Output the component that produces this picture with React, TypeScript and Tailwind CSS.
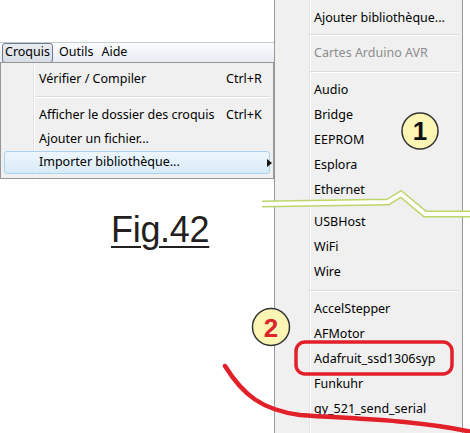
const font = { fontFamily: '"Noto Sans", "Open Sans", sans-serif' };

function Sep({ h }: { h: string }) {
  return (
    <div className={`flex items-center ${h}`}>
      <div className="ml-[35px] mr-[3px] h-[2px] flex-1 border-t border-[#dcdcdc] border-b-white bg-white" />
    </div>
  );
}

function SubItem({ label, h = 'h-[25px]', muted = false }: { label: string; h?: string; muted?: boolean }) {
  return (
    <div className={`flex items-center pl-[39px] ${h} ${muted ? 'text-[#8d8d8d]' : 'text-black'}`}>{label}</div>
  );
}

function LeftMenu() {
  return (
    <div className="pt-[42px]">
      <div className="flex h-[20px] items-center border-t border-[#c6cbd2] bg-gradient-to-b from-[#fbfcfe] to-[#e7ecf3] text-[12.5px]">
        <div className="ml-[2px] flex h-[20px] w-[51px] items-center justify-center rounded-[3px] border border-[#6f7b8c] bg-gradient-to-b from-[#e9ecf0] to-[#d9dee6]">
          Croquis
        </div>
        <span className="ml-[6px]">Outils</span>
        <span className="ml-[8px]">Aide</span>
      </div>
      <div className="relative h-[117px] border border-[#979797] bg-[#f0f0f0] text-[12.5px]">
        <div className="absolute left-[32px] top-0 h-full w-[2px] border-l border-[#e2e3e3] bg-white" />
        <div className="relative pt-[4px]">
          <div className="flex h-[24px] items-center pl-[38px] pr-[7px]">
            <span className="flex-1">Vérifier / Compiler</span>
            <span className="w-[40px]">Ctrl+R</span>
          </div>
          <div className="flex h-[12px] items-center">
            <div className="ml-[34px] mr-[3px] h-[2px] flex-1 border-t border-[#dcdcdc] bg-white" />
          </div>
          <div className="flex h-[24px] items-center pl-[38px] pr-[7px]">
            <span className="flex-1">Afficher le dossier des croquis</span>
            <span className="w-[40px]">Ctrl+K</span>
          </div>
          <div className="flex h-[24px] items-center pl-[38px]">Ajouter un fichier...</div>
          <div className="mx-[3px] flex h-[23px] items-center rounded-[3px] border border-[#a9d3ef] bg-gradient-to-b from-[#eef6fd] to-[#d8eaf8] pl-[34px]">
            <span className="flex-1">Importer bibliothèque...</span>
            <svg width="5" height="8" viewBox="0 0 5 8" className="mr-[-3px]">
              <path d="M0 0 L5 4 L0 8 Z" fill="#111" />
            </svg>
          </div>
        </div>
      </div>
      <div className="mt-[33px] pl-[111px] text-[36px] leading-none tracking-[-0.3px] text-[#231f20] underline decoration-[2px] underline-offset-[4px]" style={{ fontFamily: '"Liberation Sans", Arial, sans-serif' }}>
        Fig.42
      </div>
    </div>
  );
}

function RightMenu() {
  const first = ['Audio', 'Bridge', 'EEPROM', 'Esplora', 'Ethernet'];
  const second = ['USBHost', 'WiFi', 'Wire'];
  const third = ['AccelStepper', 'AFMotor', 'Adafruit_ssd1306syp', 'Funkuhr', 'gy_521_send_serial'];
  return (
    <div className="relative h-[433px] w-[189px] overflow-hidden border-x border-[#979797] bg-[#f0f0f0] text-[12.5px]">
      <div className="absolute left-[34px] top-0 h-full w-[2px] border-l border-[#e2e3e3] bg-white" />
      <div className="relative pt-[6px]">
        <SubItem label="Ajouter bibliothèque..." h="h-[24px]" />
        <Sep h="h-[10px]" />
        <SubItem label="Cartes Arduino AVR" h="h-[26px]" muted />
        <Sep h="h-[12px]" />
        {first.map((l) => (
          <SubItem key={l} label={l} />
        ))}
        <div className="h-[7px]" />
        {second.map((l) => (
          <SubItem key={l} label={l} />
        ))}
        <Sep h="h-[12px]" />
        {third.map((l) => (
          <SubItem key={l} label={l} />
        ))}
      </div>
    </div>
  );
}

export default function App() {
  return (
    <div className="relative h-[433px] w-[470px] overflow-hidden bg-white text-black" style={font}>
      <div className="flex">
        <div className="w-[274px]">
          <LeftMenu />
        </div>
        <RightMenu />
      </div>
      <svg className="pointer-events-none absolute left-0 top-0" width="470" height="433" viewBox="0 0 470 433">
        <polyline points="262,204 388,202 401,194 425,214 470,214" fill="none" stroke="#bcd66a" strokeWidth="7" strokeLinejoin="miter" />
        <polyline points="262,204 388,202 401,194 425,214 470,214" fill="none" stroke="#ffffff" strokeWidth="4" strokeLinejoin="miter" />
        <circle cx="420" cy="131" r="18" fill="#fdf5b4" stroke="#333" strokeWidth="1.5" />
        <text x="420" y="140" textAnchor="middle" fontSize="26" fontWeight="bold" fill="#111" fontFamily="Liberation Sans, Arial, sans-serif">1</text>
        <circle cx="271" cy="327" r="18.5" fill="#fdf5b4" stroke="#333" strokeWidth="1.5" />
        <text x="271" y="336.5" textAnchor="middle" fontSize="26" fontWeight="bold" fill="#d9252b" fontFamily="Liberation Sans, Arial, sans-serif">2</text>
        <rect x="296" y="342" width="156" height="32" rx="9" fill="none" stroke="#e2202a" strokeWidth="3.5" />
        <path d="M225,366 C243,395 262,410 300,415 C350,419 410,419 472,432" fill="none" stroke="#e2202a" strokeWidth="4.5" strokeLinecap="round" />
      </svg>
    </div>
  );
}
